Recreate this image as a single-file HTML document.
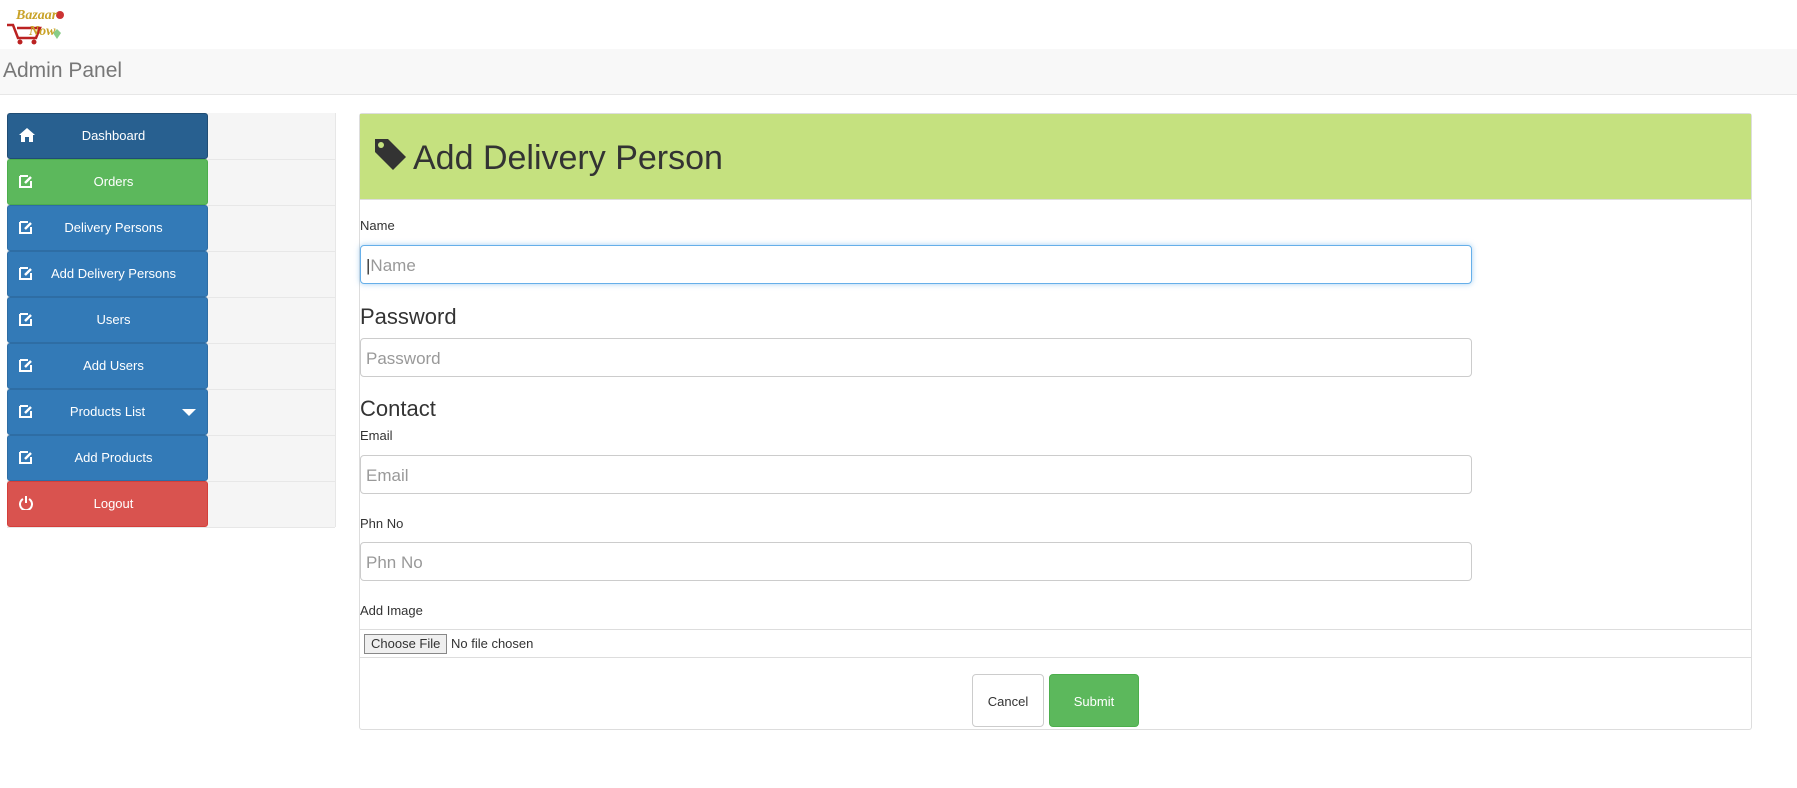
<!DOCTYPE html>
<html><head><meta charset="utf-8"><style>
body{margin:0;width:1797px;height:788px;background:#fff;font-family:"Liberation Sans",Arial,sans-serif;color:#333;position:relative;overflow:hidden}
.a{position:absolute}
.hdr{left:0;top:49px;width:1797px;height:45px;background:#f8f8f8;border-bottom:1px solid #e7e7e7}
.hdr span{position:absolute;left:3px;top:10px;font-size:21px;color:#777}
.side{left:7px;top:113px;width:328px;height:414px;background:#f5f5f5;border-right:1px solid #e7e7e7}
.side .row{position:absolute;left:0;width:328px;height:46px;border-bottom:1px solid #e7e7e7}
.btn{position:absolute;left:0;top:0;width:199px;height:44px;border-radius:3px;color:#fff;font-size:13px;text-align:center;line-height:44px;border:1px solid #2e6da4;background:#337ab7;box-sizing:border-box;padding-left:12px;width:201px;height:46px}
.btn svg{position:absolute;left:11px;top:14px}
.panel{left:359px;top:113px;width:1391px;height:615px;border:1px solid #ddd;border-radius:3px}
.ph{left:0;top:0;width:1391px;height:85px;background:#c5e17f;border-bottom:1px solid #ddd}
.lbl{font-size:13px;color:#333}
.inp{left:0;width:1112px;height:39px;border:1px solid #ccc;border-radius:4px;font-size:17px;color:#999;line-height:39px;padding-left:5px;box-sizing:border-box}
.h{font-size:22px;color:#333}
</style></head><body>
<div class="a" style="left:5px;top:9px;width:60px;height:38px">
<svg width="60" height="38"><path d="M2 16h6l5 13h18l4-10H12" stroke="#b22" stroke-width="2.5" fill="none"/><circle cx="15" cy="33" r="2.5" fill="#b22"/><circle cx="29" cy="33" r="2.5" fill="#b22"/><circle cx="55" cy="6" r="4" fill="#c33"/><path d="M48 24l4-4 4 4-4 6z" fill="#8c8"/></svg>
<span class="a" style="left:11px;top:-1px;font:italic bold 14px 'Liberation Serif',serif;color:#c9a227">Bazaar</span>
<span class="a" style="left:24px;top:15px;font:italic bold 14px 'Liberation Serif',serif;color:#c9a227">Now</span>
</div>
<div class="a hdr"><span>Admin Panel</span></div>
<div class="a side">
<div class="row" style="top:0"><div class="btn" style="background:#286090;border-color:#204d74"><svg width="16" height="14" viewBox="0 0 16 14"><path d="M8 0L0 7h2v7h4V9h4v5h4V7h2z" fill="#fff"/></svg>Dashboard</div></div>
<div class="row" style="top:46px"><div class="btn" style="background:#5cb85c;border-color:#4cae4c"><svg width="14" height="14"><path d="M1 2h8M1 2v11h11V7" stroke="#fff" stroke-width="2" fill="none"/><path d="M6 9l6-6" stroke="#fff" stroke-width="2.5"/></svg>Orders</div></div>
<div class="row" style="top:92px"><div class="btn"><svg width="14" height="14"><path d="M1 2h8M1 2v11h11V7" stroke="#fff" stroke-width="2" fill="none"/><path d="M6 9l6-6" stroke="#fff" stroke-width="2.5"/></svg>Delivery Persons</div></div>
<div class="row" style="top:138px"><div class="btn"><svg width="14" height="14"><path d="M1 2h8M1 2v11h11V7" stroke="#fff" stroke-width="2" fill="none"/><path d="M6 9l6-6" stroke="#fff" stroke-width="2.5"/></svg>Add Delivery Persons</div></div>
<div class="row" style="top:184px"><div class="btn"><svg width="14" height="14"><path d="M1 2h8M1 2v11h11V7" stroke="#fff" stroke-width="2" fill="none"/><path d="M6 9l6-6" stroke="#fff" stroke-width="2.5"/></svg>Users</div></div>
<div class="row" style="top:230px"><div class="btn"><svg width="14" height="14"><path d="M1 2h8M1 2v11h11V7" stroke="#fff" stroke-width="2" fill="none"/><path d="M6 9l6-6" stroke="#fff" stroke-width="2.5"/></svg>Add Users</div></div>
<div class="row" style="top:276px"><div class="btn" style="padding-left:0"><svg width="14" height="14"><path d="M1 2h8M1 2v11h11V7" stroke="#fff" stroke-width="2" fill="none"/><path d="M6 9l6-6" stroke="#fff" stroke-width="2.5"/></svg>Products List<span class="a" style="left:174px;top:19px;width:0;height:0;border-left:7px solid transparent;border-right:7px solid transparent;border-top:7px solid #fff"></span></div></div>
<div class="row" style="top:322px"><div class="btn"><svg width="14" height="14"><path d="M1 2h8M1 2v11h11V7" stroke="#fff" stroke-width="2" fill="none"/><path d="M6 9l6-6" stroke="#fff" stroke-width="2.5"/></svg>Add Products</div></div>
<div class="row" style="top:368px"><div class="btn" style="background:#d9534f;border-color:#d43f3a"><svg width="14" height="14"><path d="M4 3a6 6 0 1 0 6 0" stroke="#fff" stroke-width="2" fill="none"/><path d="M7 0v7" stroke="#fff" stroke-width="2"/></svg>Logout</div></div>
</div>
<div class="a panel">
<div class="a ph"><svg class="a" style="left:13px;top:23px" width="34" height="34" viewBox="0 0 34 34"><path d="M2 2h13l18 18-13 13L2 15z" fill="#333"/><circle cx="8" cy="8" r="3" fill="#c5e17f"/></svg><span class="a" style="left:53px;top:25px;font-size:34px;color:#333">Add Delivery Person</span></div>
<span class="a lbl" style="left:0;top:104px">Name</span>
<div class="a inp" style="top:131px;border-color:#66afe9;box-shadow:0 0 6px rgba(102,175,233,.6)"><span style="color:#333">|</span>Name</div>
<span class="a h" style="left:0;top:190px">Password</span>
<div class="a inp" style="top:224px">Password</div>
<span class="a h" style="left:0;top:282px">Contact</span>
<span class="a lbl" style="left:0;top:314px">Email</span>
<div class="a inp" style="top:341px">Email</div>
<span class="a lbl" style="left:0;top:402px">Phn No</span>
<div class="a inp" style="top:428px">Phn No</div>
<span class="a lbl" style="left:0;top:489px">Add Image</span>
<div class="a" style="left:0;top:515px;width:1391px;height:27px;border-top:1px solid #ddd;border-bottom:1px solid #ddd;font-size:13px;line-height:27px"><span style="display:inline-block;margin-left:4px;border:1px solid #888;background:#efefef;padding:0 6px;line-height:18px">Choose File</span> No file chosen</div>
<div class="a" style="left:612px;top:560px;width:72px;height:53px;border:1px solid #ccc;border-radius:4px;font-size:13px;text-align:center;line-height:53px;box-sizing:border-box">Cancel</div>
<div class="a" style="left:689px;top:560px;width:90px;height:53px;background:#5cb85c;border:1px solid #4cae4c;border-radius:4px;color:#fff;font-size:13px;text-align:center;line-height:53px;box-sizing:border-box">Submit</div>
</div>
</body></html>
